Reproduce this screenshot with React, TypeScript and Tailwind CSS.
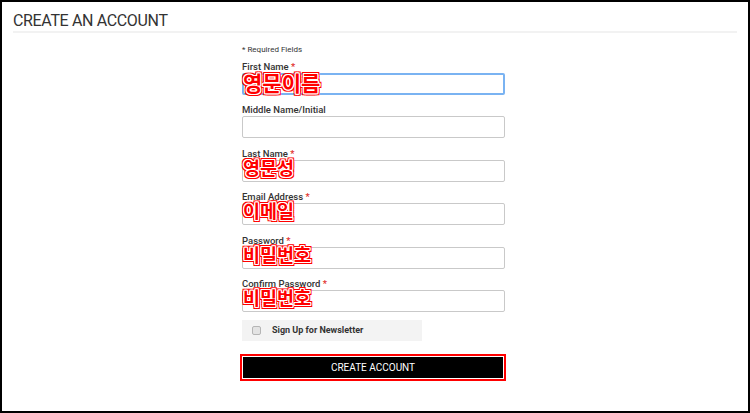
import React from 'react';

interface Field {
  label: string;
  required: boolean;
  note?: string;
  noteSize?: 'lg' | 'md';
  focused?: boolean;
  type?: string;
}

const fields: Field[] = [
  { label: 'First Name', required: true, note: '영문이름', noteSize: 'lg', focused: true },
  { label: 'Middle Name/Initial', required: false },
  { label: 'Last Name', required: true, note: '영문성' },
  { label: 'Email Address', required: true, note: '이메일' },
  { label: 'Password', required: true, note: '비밀번호', type: 'password' },
  { label: 'Confirm Password', required: true, note: '비밀번호', type: 'password' },
];

// red handwriting-style annotation with a white halo, drawn over the inputs
const noteClass =
  "pointer-events-none absolute left-[1px] leading-none font-bold text-[#ff0000] [font-family:'Noto_Sans_CJK_KR',sans-serif] [text-shadow:1px_0_0_#fff,-1px_0_0_#fff,0_1px_0_#fff,0_-1px_0_#fff,1px_1px_0_#fff,-1px_-1px_0_#fff,1px_-1px_0_#fff,-1px_1px_0_#fff,2px_0_0_#f00,-2px_0_0_#f00,0_2px_0_#f00,0_-2px_0_#f00,2px_2px_0_#f00,-2px_-2px_0_#f00,2px_-2px_0_#f00,-2px_2px_0_#f00]";

const FormField: React.FC<{ field: Field }> = ({ field }) => (
  <div className="flex flex-col">
    <label className="h-[12px] text-[9.5px] leading-[12px] font-medium text-[#333]">
      {field.label}
      {field.required && <span className="text-[#e02b27]"> *</span>}
    </label>
    <div className="relative">
      <input
        type={field.type ?? 'text'}
        className={`block h-[22px] w-full rounded-[2px] bg-white px-2 text-[11px] outline-none ${
          field.focused ? 'border-2 border-[#7ab3f2]' : 'border border-[#c9c9c9]'
        }`}
      />
      {field.note && (
        <span
          className={`${noteClass} ${
            field.noteSize === 'lg' ? 'top-[-1px] text-[21px]' : 'top-[-2px] text-[18.5px]'
          }`}
        >
          {field.note}
        </span>
      )}
    </div>
  </div>
);

export default function App() {
  return (
    <div className="h-[413px] w-[750px] overflow-hidden border-2 border-black bg-white font-['Roboto',sans-serif]">
      <div className="px-[11px] pt-[9px]">
        <h1 className="text-[16px] leading-[20px] font-normal tracking-[-0.35px] text-[#333]">CREATE AN ACCOUNT</h1>
        <div className="h-[2px] bg-[#f2f2f2]" />

        <div className="ml-[229px] mt-[12px] w-[263px]">
          <p className="h-[16px] text-[8px] leading-[10px] text-[#333]">* Required Fields</p>

          <div className="flex flex-col gap-[9.4px]">
            {fields.map((f) => (
              <FormField key={f.label + (f.type ?? '')} field={f} />
            ))}
          </div>

          <div className="mt-[8px] flex h-[21px] w-[180px] items-center bg-[#f3f3f3] pl-[10px]">
            <span className="h-[9px] w-[9px] rounded-[2px] border border-[#b5b5b5] bg-[#e3e3e3]" />
            <span className="ml-[11px] text-[9px] font-bold text-[#333]">Sign Up for Newsletter</span>
          </div>

          <div className="-ml-[2px] mt-[13px] w-[266px] border-2 border-[#ff0000] bg-white p-[1px]">
            <button className="flex h-[21px] w-full items-center justify-center bg-black text-[10px] font-normal text-white">
              CREATE ACCOUNT
            </button>
          </div>
        </div>
      </div>
    </div>
  );
}
